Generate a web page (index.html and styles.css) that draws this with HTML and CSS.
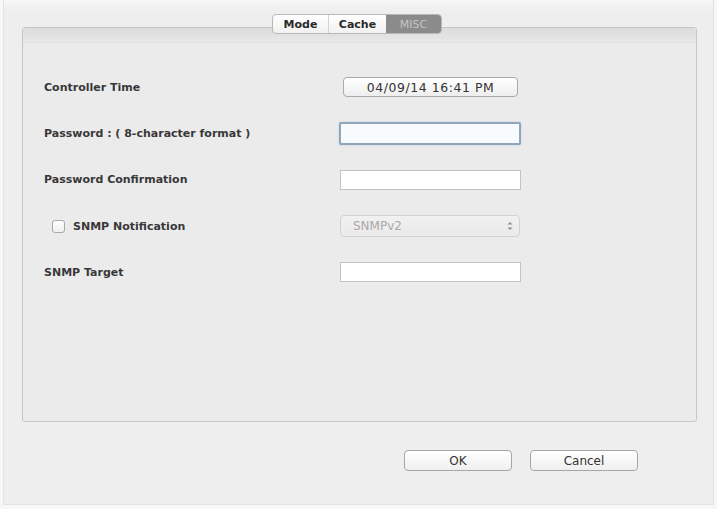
FILE: index.html
```html
<!DOCTYPE html>
<html>
<head>
<meta charset="utf-8">
<link rel="stylesheet" href="styles.css">
</head>
<body>
<div class="window">
  <div class="tabs">
    <span class="tab">Mode</span><span class="tab">Cache</span><span class="tab active">MISC</span>
  </div>
  <div class="panel">
    <div class="panel-top"></div>
    <div class="form">
      <div class="row">
        <span class="label">Controller Time</span>
        <span class="timebtn">04/09/14 16:41 PM</span>
      </div>
      <div class="row">
        <span class="label">Password : ( 8-character format )</span>
        <span class="input focused"></span>
      </div>
      <div class="row">
        <span class="label">Password Confirmation</span>
        <span class="input"></span>
      </div>
      <div class="row">
        <span class="label check-label"><span class="checkbox"></span>SNMP Notification</span>
        <span class="select"><span>SNMPv2</span><svg class="arrows" width="6" height="10" viewBox="0 0 6 10"><path d="M0.5 3.5 L3 1 L5.5 3.5 Z M0.5 6.5 L3 9 L5.5 6.5 Z" fill="#8e8e8e"/></svg></span>
      </div>
      <div class="row">
        <span class="label">SNMP Target</span>
        <span class="input"></span>
      </div>
    </div>
  </div>
  <div class="actions">
    <span class="btn">OK</span>
    <span class="btn">Cancel</span>
  </div>
</div>
</body>
</html>
```
FILE: styles.css
```css
html, body {
  margin: 0;
  padding: 0;
  background: #f7f7f7;
}
body {
  font-family: "DejaVu Sans", "Open Sans", sans-serif;
  font-size: 12px;
  color: #2e2e2e;
}
.window {
  width: 711px;
  height: 505px;
  margin: 0 3px 4px 3px;
  box-sizing: border-box;
  padding-top: 14px;
  border: 1px solid #e3e3e3;
  border-top: none;
  background: linear-gradient(#f7f7f7 0, #efeeef 12px, #efeeef 100%);
}
.tabs {
  position: relative;
  z-index: 2;
  display: flex;
  width: 170px;
  height: 20px;
  margin: 0 0 -7px 268px;
  border: 1px solid #b8b8b8;
  border-radius: 4px;
  box-sizing: border-box;
  overflow: hidden;
  background: linear-gradient(#ffffff, #f1f1f1);
}
.tab {
  display: flex;
  align-items: center;
  justify-content: center;
  height: 100%;
  font-weight: bold;
  font-size: 11px;
  color: #2a2a2a;
}
.tab:nth-child(1) { width: 55px; border-right: 1px solid #d2d2d2; }
.tab:nth-child(2) { width: 57px; }
.tab.active {
  flex: 1;
  background: #8c8b8c;
  color: #c4c4c4;
  font-weight: normal;
}
.panel {
  margin-left: 18px;
  width: 675px;
  height: 395px;
  box-sizing: border-box;
  border: 1px solid #c6c6c6;
  border-radius: 3px;
  background: #ecebec;
}
.panel-top {
  height: 14px;
  background: linear-gradient(#dddcdd, #e8e7e8);
  border-bottom: 1px solid #e2e1e2;
}
.form {
  padding-top: 21px;
  padding-left: 21px;
}
.row {
  display: grid;
  grid-template-columns: 296px 182px;
  align-items: center;
  height: 46.3px;
}
.label {
  font-weight: bold;
  font-size: 11px;
  color: #383838;
  display: flex;
  align-items: center;
}
.check-label {
  padding-left: 8px;
}
.checkbox {
  width: 11px;
  height: 11px;
  border: 1px solid #a9a9a9;
  border-radius: 3px;
  background: linear-gradient(#ffffff, #efefef);
  margin-right: 8px;
}
.timebtn {
  display: flex;
  align-items: center;
  justify-content: center;
  width: 175px;
  height: 20px;
  margin-left: 3px;
  box-sizing: border-box;
  border: 1px solid #a9a9a9;
  border-radius: 4px;
  background: linear-gradient(#ffffff, #eeeeee);
  font-size: 12.4px;
  letter-spacing: 0.6px;
  color: #333;
}
.input {
  display: block;
  width: 181px;
  height: 20px;
  box-sizing: border-box;
  border: 1px solid #c3c3c3;
  background: #ffffff;
}
.input.focused {
  width: 182px;
  height: 23px;
  margin-left: -1px;
  border: 2px solid #8fa6bd;
  border-radius: 2px;
  background: #f7fbfd;
  box-shadow: 0 0 2px #b6c8da;
}
.select {
  display: flex;
  align-items: center;
  justify-content: space-between;
  width: 180px;
  height: 22px;
  box-sizing: border-box;
  padding: 0 6px 0 12px;
  border: 1px solid #d3d2d3;
  border-radius: 4px;
  background: linear-gradient(#f2f1f2, #ebeaeb);
  color: #a8a8a8;
  font-size: 12px;
}
.arrows {
  display: block;
}
.actions {
  display: flex;
  justify-content: flex-end;
  gap: 18px;
  margin-top: 28px;
  padding-right: 75px;
}
.btn {
  display: flex;
  align-items: center;
  justify-content: center;
  width: 108px;
  height: 21px;
  box-sizing: border-box;
  border: 1px solid #a7a7a7;
  border-radius: 4px;
  background: linear-gradient(#ffffff, #efefef);
  font-size: 12px;
  color: #333;
}
```
